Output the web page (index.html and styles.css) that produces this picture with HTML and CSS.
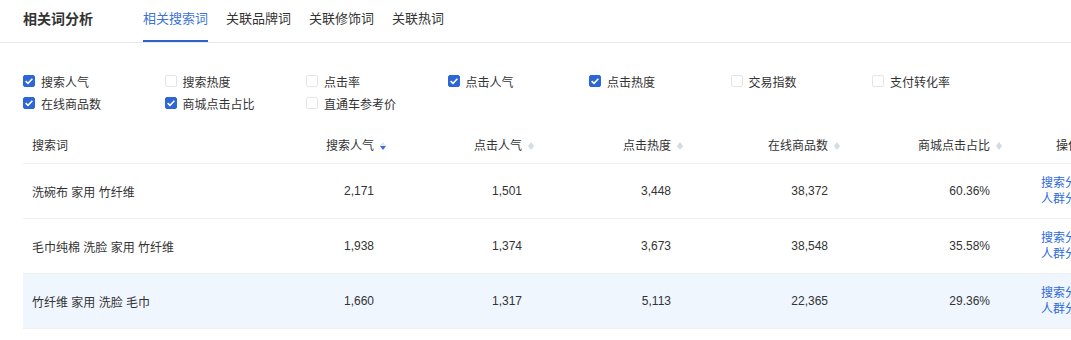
FILE: index.html
```html
<!DOCTYPE html>
<html lang="zh-CN">
<head>
    <meta charset="UTF-8">
    <title>相关词分析</title>
    <link rel="stylesheet" href="styles.css">
</head>
<body>
    <div class="tabs">
        <div class="title">相关词分析</div>
        <a href="#" class="tab active">相关搜索词</a>
        <a href="#" class="tab">关联品牌词</a>
        <a href="#" class="tab">关联修饰词</a>
        <a href="#" class="tab">关联热词</a>
    </div>

    <div class="filters">
        <label class="check on"><span class="box"></span>搜索人气</label>
        <label class="check"><span class="box"></span>搜索热度</label>
        <label class="check"><span class="box"></span>点击率</label>
        <label class="check on"><span class="box"></span>点击人气</label>
        <label class="check on"><span class="box"></span>点击热度</label>
        <label class="check"><span class="box"></span>交易指数</label>
        <label class="check"><span class="box"></span>支付转化率</label>
        <label class="check on"><span class="box"></span>在线商品数</label>
        <label class="check on"><span class="box"></span>商城点击占比</label>
        <label class="check"><span class="box"></span>直通车参考价</label>
    </div>

    <div class="table">
        <div class="row head">
            <div class="cell">搜索词</div>
            <div class="cell num">搜索人气<span class="sort desc"></span></div>
            <div class="cell num">点击人气<span class="sort"></span></div>
            <div class="cell num">点击热度<span class="sort"></span></div>
            <div class="cell num">在线商品数<span class="sort"></span></div>
            <div class="cell num">商城点击占比<span class="sort"></span></div>
            <div class="cell ops">操作</div>
        </div>
        <div class="row">
            <div class="cell">洗碗布 家用 竹纤维</div>
            <div class="cell num">2,171</div>
            <div class="cell num">1,501</div>
            <div class="cell num">3,448</div>
            <div class="cell num">38,372</div>
            <div class="cell num">60.36%</div>
            <div class="cell links"><a href="#">搜索分析</a><a href="#">人群分析</a></div>
        </div>
        <div class="row">
            <div class="cell">毛巾纯棉 洗脸 家用 竹纤维</div>
            <div class="cell num">1,938</div>
            <div class="cell num">1,374</div>
            <div class="cell num">3,673</div>
            <div class="cell num">38,548</div>
            <div class="cell num">35.58%</div>
            <div class="cell links"><a href="#">搜索分析</a><a href="#">人群分析</a></div>
        </div>
        <div class="row hover">
            <div class="cell">竹纤维 家用 洗脸 毛巾</div>
            <div class="cell num">1,660</div>
            <div class="cell num">1,317</div>
            <div class="cell num">5,113</div>
            <div class="cell num">22,365</div>
            <div class="cell num">29.36%</div>
            <div class="cell links"><a href="#">搜索分析</a><a href="#">人群分析</a></div>
        </div>
    </div>
</body>
</html>
```

FILE: styles.css
```css
html, body {
    overflow: hidden;
}
body {
    margin: 0;
    background: #fff;
    color: #333;
    font-family: "Liberation Sans", "Noto Sans CJK SC", sans-serif;
    font-size: 12px;
}
a {
    text-decoration: none;
}

/* tabs */
.tabs {
    display: flex;
    align-items: stretch;
    height: 42px;
    padding-left: 23px;
    border-bottom: 1px solid #e6e8eb;
}
.title {
    font-size: 14px;
    font-weight: bold;
    line-height: 38px;
    margin-right: 50px;
    color: #333;
}
.tab {
    font-size: 13px;
    line-height: 38px;
    color: #333;
    margin-right: 18px;
    border-bottom: 2px solid transparent;
}
.tab.active {
    color: #3d72d9;
    border-bottom-color: #2f62c9;
}

/* checkbox filters */
.filters {
    display: grid;
    grid-template-columns: repeat(7, 141.5px);
    grid-auto-rows: 22px;
    margin: 27px 0 0 23px;
}
.check {
    display: flex;
    align-items: center;
    color: #333;
}
.box {
    width: 12px;
    height: 12px;
    box-sizing: border-box;
    border: 1px solid #e3e5e8;
    border-radius: 2px;
    margin-right: 6px;
    background: #fff;
}
.check.on .box {
    border-color: #2d66d6;
    background: #2d66d6 url("data:image/svg+xml,%3Csvg xmlns='http://www.w3.org/2000/svg' viewBox='0 0 12 12'%3E%3Cpath d='M2.6 6.1 5 8.4 9.4 3.8' fill='none' stroke='%23fff' stroke-width='1.6'/%3E%3C/svg%3E") center / 12px 12px no-repeat;
}

/* table */
.table {
    margin: 12px 0 0 23px;
}
.row {
    display: grid;
    grid-template-columns: 210px 165px 148px 149px 157px 162px 130px;
    height: 54px;
    align-items: center;
    border-bottom: 1px solid #eef0f3;
}
.row.head {
    height: 37px;
}
.row.hover {
    background: #eff6fe;
}
.cell {
    padding-left: 9px;
    white-space: nowrap;
}
.cell.num {
    text-align: right;
    padding: 0 24px 0 0;
}
.head .cell.num {
    padding-right: 12px;
}
.sort {
    display: inline-block;
    position: relative;
    width: 6px;
    height: 8px;
    margin-left: 6px;
    vertical-align: 0;
}
.sort::before,
.sort::after {
    content: "";
    position: absolute;
    left: 0;
    border-left: 3px solid transparent;
    border-right: 3px solid transparent;
}
.sort::before {
    top: 0;
    border-bottom: 4px solid #d3dbe6;
}
.sort::after {
    bottom: 0;
    border-top: 4px solid #d3dbe6;
}
.sort.desc::before {
    border-bottom-color: #e3e8f0;
}
.sort.desc::after {
    border-top-color: #3d6fd8;
}
.cell.ops {
    padding-left: 42px;
}
.cell.links {
    padding-left: 27px;
    display: flex;
    flex-direction: column;
    line-height: 16px;
}
.links a {
    color: #2f6ad9;
}
```
